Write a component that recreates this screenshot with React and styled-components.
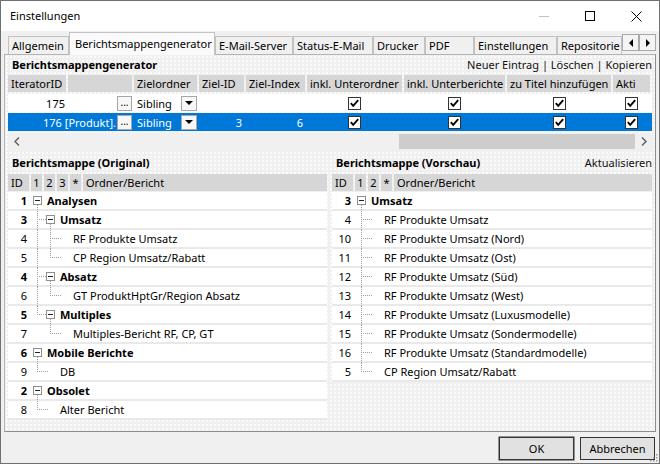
import styled, { createGlobalStyle } from "styled-components";

const GlobalStyle = createGlobalStyle`
  * { box-sizing: border-box; }
  html, body { margin: 0; padding: 0; }
  body {
    background: #f0f0f0;
    font-family: "Noto Sans", "DejaVu Sans", sans-serif;
    font-size: 11px;
    color: #000;
  }
`;

const Window = styled.div`
  position: relative;
  width: 660px;
  height: 464px;
  border: 1px solid #707070;
  background: #f0f0f0;
  display: flex;
  flex-direction: column;
  overflow: hidden;
`;

const TitleBar = styled.div`
  height: 30px;
  flex-shrink: 0;
  background: #fff;
  display: flex;
  align-items: center;
`;

const Title = styled.div`
  flex: 1;
  padding-left: 9px;
  padding-bottom: 1px;
`;

const CaptionButton = styled.div`
  width: 46px;
  height: 30px;
  display: flex;
  align-items: center;
  justify-content: center;
`;

const TabStrip = styled.div`
  height: 23px;
  flex-shrink: 0;
  display: flex;
  align-items: flex-end;
  padding-left: 7px;
`;

const Tab = styled.div`
  position: relative;
  z-index: ${(p) => (p.$active ? 1 : 0)};
  flex-shrink: 0;
  width: ${(p) => p.$w}px;
  height: ${(p) => (p.$active ? 23 : 18)}px;
  margin-bottom: ${(p) => (p.$active ? -1 : 0)}px;
  padding: ${(p) => (p.$active ? "0 0 2px 5px" : "0 0 0 3px")};
  border: 1px solid #c2c2c2;
  border-bottom: none;
  background: ${(p) => (p.$active ? "#fafafa" : "#f0f0f0")};
  display: flex;
  align-items: center;
  white-space: nowrap;
  overflow: hidden;
`;

const TabScroll = styled.div`
  align-self: flex-start;
  margin-top: 3px;
  display: flex;
`;

const TabScrollButton = styled.div`
  width: 17px;
  height: 17px;
  border: 1px solid #a9a9a9;
  background: #f4f4f4;
  display: flex;
  align-items: center;
  justify-content: center;
  &::after {
    content: "";
    border-top: 4px solid transparent;
    border-bottom: 4px solid transparent;
    ${(p) =>
      p.$dir === "left"
        ? "border-right: 4px solid #000;"
        : "border-left: 4px solid #000;"}
  }
`;

const Panel = styled.div`
  flex-shrink: 0;
  margin-left: 3px;
  width: 652px;
  height: 378px;
  border: 1px solid #b4b4b4;
  border-right-color: #8e8e8e;
  border-bottom-color: #8e8e8e;
  background-color: #f0f0f0;
  background-image: radial-gradient(circle, #fbfbfb 0.7px, transparent 0.9px);
  background-size: 4px 4px;
  padding: 0 3px 2px 3px;
  display: flex;
  flex-direction: column;
`;

const SectionBar = styled.div`
  height: ${(p) => p.$h}px;
  flex-shrink: 0;
  display: flex;
  align-items: center;
  justify-content: space-between;
  padding: 0 0 ${(p) => (p.$h > 20 ? 0 : 1)}px 4px;
`;

const SectionTitle = styled.div`
  font-weight: 700;
`;

const SectionLinks = styled.div`
  color: #111;
`;

const columns = "58px 64px 63px 45px 59px 95px 101px 104px 37px";

const GridHeader = styled.div`
  display: grid;
  grid-template-columns: ${columns};
  column-gap: 2px;
  height: 17px;
  flex-shrink: 0;
`;

const HeadCell = styled.div`
  background: #d6d6d6;
  padding: 0 3px;
  line-height: 17px;
  white-space: nowrap;
  overflow: hidden;
`;

const GridRows = styled.div`
  margin-top: 2px;
  display: flex;
  flex-direction: column;
  gap: 1px;
  flex-shrink: 0;
`;

const GridRow = styled.div`
  display: grid;
  grid-template-columns: ${columns};
  column-gap: 2px;
  height: 18px;
  background: ${(p) => (p.$selected ? "#0078d7" : "#fff")};
  color: ${(p) => (p.$selected ? "#fff" : "#000")};
`;

const Cell = styled.div`
  grid-column: ${(p) => (p.$span ? `span ${p.$span}` : "auto")};
  display: flex;
  align-items: center;
  justify-content: ${(p) =>
    p.$align === "right"
      ? "flex-end"
      : p.$align === "center"
      ? "center"
      : "space-between"};
  padding: 0 ${(p) => p.$pad || 0}px;
  white-space: nowrap;
  overflow: hidden;
`;

const CellText = styled.span`
  flex: 1;
  text-align: ${(p) => (p.$left ? "left" : "right")};
  padding: ${(p) => (p.$left ? "0 0 0 3px" : "0 1px 0 0")};
  overflow: hidden;
`;

const EllipsisButton = styled.div`
  width: 15px;
  height: 15px;
  flex-shrink: 0;
  border: 1px solid #a6a6a6;
  background: #f7f7f7;
  color: #000;
  font-size: 10px;
  line-height: 10px;
  text-align: center;
`;

const DropButton = styled.div`
  width: 16px;
  height: 15px;
  flex-shrink: 0;
  border: 1px solid #a6a6a6;
  background: #f7f7f7;
  display: flex;
  align-items: center;
  justify-content: center;
  &::after {
    content: "";
    border-left: 4px solid transparent;
    border-right: 4px solid transparent;
    border-top: 4px solid #000;
  }
`;

const CheckBox = styled.div`
  width: 13px;
  height: 13px;
  border: 1px solid #333;
  background: #fff;
  display: flex;
  align-items: center;
  justify-content: center;
`;

const HScroll = styled.div`
  margin-top: 2px;
  height: 17px;
  flex-shrink: 0;
  display: flex;
  background: #f0f0f0;
`;

const ScrollArrow = styled.div`
  width: 17px;
  display: flex;
  align-items: center;
  justify-content: center;
`;

const ScrollTrack = styled.div`
  flex: 1;
  display: flex;
  justify-content: flex-end;
  padding: 1px 0;
`;

const ScrollThumb = styled.div`
  width: 236px;
  background: #cdcdcd;
`;

const Split = styled.div`
  flex: 1;
  min-height: 0;
  display: grid;
  grid-template-columns: 319px 1fr;
  column-gap: 5px;
`;

const TreePane = styled.div`
  display: flex;
  flex-direction: column;
  min-height: 0;
`;

const TreeHeader = styled.div`
  display: flex;
  gap: 2px;
  height: 17px;
  margin-bottom: 1px;
  flex-shrink: 0;
`;

const TreeHeadCell = styled.div`
  flex: ${(p) => (p.$grow ? 1 : "none")};
  width: ${(p) => (p.$w ? `${p.$w}px` : "auto")};
  background: #d6d6d6;
  line-height: 17px;
  padding: 0 ${(p) => (p.$center ? 0 : 3)}px;
  text-align: ${(p) => (p.$center ? "center" : "left")};
  white-space: nowrap;
`;

const TreeBody = styled.div`
  flex: 1;
  background: #fff;
  overflow: hidden;
`;

const TreeRow = styled.div`
  display: flex;
  height: 19px;
  border-bottom: 2px solid #e9e9e9;
  line-height: 17px;
`;

const TreeId = styled.div`
  width: 21px;
  flex-shrink: 0;
  text-align: right;
  padding-right: 2px;
  font-weight: ${(p) => (p.$folder ? 700 : 400)};
`;

const TreeLines = styled.svg`
  display: block;
  flex-shrink: 0;
  overflow: visible;
`;

const TreeLabel = styled.span`
  white-space: nowrap;
  font-weight: ${(p) => (p.$folder ? 700 : 400)};
`;

const Footer = styled.div`
  flex: 1;
  display: flex;
  justify-content: flex-end;
  align-items: flex-start;
  gap: 6px;
  padding: 5px 4px 0 0;
`;

const DialogButton = styled.button`
  width: 75px;
  height: 23px;
  font: inherit;
  color: #000;
  background: #e1e1e1;
  border: 1px solid #333;
  box-shadow: ${(p) => (p.$default ? "inset 0 0 0 1px #e1e1e1, 0 0 0 0.5px #333" : "none")};
  padding: 0 0 1px;
`;

const Grip = styled.svg`
  position: absolute;
  right: 1px;
  bottom: 1px;
`;

const leftTree = [
  { id: 1, level: 1, folder: true, label: "Analysen" },
  { id: 3, level: 2, folder: true, label: "Umsatz" },
  { id: 4, level: 3, label: "RF Produkte Umsatz" },
  { id: 5, level: 3, label: "CP Region Umsatz/Rabatt" },
  { id: 4, level: 2, folder: true, label: "Absatz" },
  { id: 6, level: 3, label: "GT ProduktHptGr/Region Absatz" },
  { id: 5, level: 2, folder: true, label: "Multiples" },
  { id: 7, level: 3, label: "Multiples-Bericht RF, CP, GT" },
  { id: 6, level: 1, folder: true, label: "Mobile Berichte" },
  { id: 9, level: 2, label: "DB" },
  { id: 2, level: 1, folder: true, label: "Obsolet" },
  { id: 8, level: 2, label: "Alter Bericht" },
];

const rightTree = [
  { id: 3, level: 1, folder: true, label: "Umsatz" },
  { id: 4, level: 2, label: "RF Produkte Umsatz" },
  { id: 10, level: 2, label: "RF Produkte Umsatz (Nord)" },
  { id: 11, level: 2, label: "RF Produkte Umsatz (Ost)" },
  { id: 12, level: 2, label: "RF Produkte Umsatz (Süd)" },
  { id: 13, level: 2, label: "RF Produkte Umsatz (West)" },
  { id: 14, level: 2, label: "RF Produkte Umsatz (Luxusmodelle)" },
  { id: 15, level: 2, label: "RF Produkte Umsatz (Sondermodelle)" },
  { id: 16, level: 2, label: "RF Produkte Umsatz (Standardmodelle)" },
  { id: 5, level: 2, label: "CP Region Umsatz/Rabatt" },
];

const tabs = [
  { label: "Allgemein", w: 61 },
  { label: "Berichtsmappengenerator", w: 146, active: true },
  { label: "E-Mail-Server", w: 78 },
  { label: "Status-E-Mail", w: 80 },
  { label: "Drucker", w: 52 },
  { label: "PDF", w: 49 },
  { label: "Einstellungen", w: 83 },
  { label: "Repositorie", w: 65 },
];

const Check = () => (
  <CheckBox>
    <svg width="11" height="11" viewBox="0 0 11 11">
      <path d="M1.8 5.2 L4.2 7.8 L9.2 2.2" fill="none" stroke="#000" strokeWidth="1.9" />
    </svg>
  </CheckBox>
);

// vertical and horizontal dotted guides for one row of a tree
const RowLines = ({ rows, index }) => {
  const row = rows[index];
  const L = row.level;
  const cx = (k) => 13 * k - 5 + 0.5;
  const hasMore = (k) => {
    for (let j = index + 1; j < rows.length; j++) {
      if (rows[j].level <= k) return false;
      if (rows[j].level === k + 1) return true;
    }
    return false;
  };
  const dots = { stroke: "#a0a0a0", strokeDasharray: "1 1", strokeWidth: 1 };
  const parts = [];
  for (let k = 1; k < L; k++) {
    if (k === L - 1) {
      parts.push(<line key={`v${k}`} x1={cx(k)} x2={cx(k)} y1={0} y2={hasMore(k) ? 19 : 9} {...dots} />);
      const end = row.folder ? 13 * L - 9 : 13 * L - 6;
      parts.push(<line key="h" x1={cx(k) + 1.5} x2={end} y1={8.5} y2={8.5} {...dots} />);
    } else if (hasMore(k)) {
      parts.push(<line key={`v${k}`} x1={cx(k)} x2={cx(k)} y1={0} y2={19} {...dots} />);
    }
  }
  const next = rows[index + 1];
  if (row.folder) {
    const bx = 13 * (L - 1) + 4;
    if (next && next.level > L) {
      parts.push(<line key="down" x1={cx(L)} x2={cx(L)} y1={13} y2={19} {...dots} />);
    }
    parts.push(
      <rect key="box" x={bx + 0.5} y={4.5} width={8} height={8} fill="#fff" stroke="#8f8f8f" />
    );
    parts.push(
      <line key="minus" x1={bx + 2} x2={bx + 7} y1={8.5} y2={8.5} stroke="#222" />
    );
  }
  return (
    <TreeLines width={13 * L + 5} height={19}>
      {parts}
    </TreeLines>
  );
};

const Tree = ({ rows, levels }) => (
  <TreePane>
    <TreeHeader>
      <TreeHeadCell $w={21}>ID</TreeHeadCell>
      {levels.map((l) => (
        <TreeHeadCell key={l} $w={11} $center>
          {l}
        </TreeHeadCell>
      ))}
      <TreeHeadCell $w={11} $center>
        *
      </TreeHeadCell>
      <TreeHeadCell $grow>Ordner/Bericht</TreeHeadCell>
    </TreeHeader>
    <TreeBody>
      {rows.map((r, i) => (
        <TreeRow key={i}>
          <TreeId $folder={r.folder}>{r.id}</TreeId>
          <RowLines rows={rows} index={i} />
          <TreeLabel $folder={r.folder}>{r.label}</TreeLabel>
        </TreeRow>
      ))}
    </TreeBody>
  </TreePane>
);

const App = () => {
  return (
    <>
      <GlobalStyle />
      <Window>
        <TitleBar>
          <Title>Einstellungen</Title>
          <CaptionButton>
            <svg width="10" height="10">
              <line x1="0" x2="10" y1="5.5" y2="5.5" stroke="#c4c4c4" />
            </svg>
          </CaptionButton>
          <CaptionButton>
            <svg width="10" height="10">
              <rect x="0.5" y="0.5" width="9" height="9" fill="none" stroke="#000" />
            </svg>
          </CaptionButton>
          <CaptionButton>
            <svg width="11" height="11">
              <path d="M0.5 0.5 L10.5 10.5 M10.5 0.5 L0.5 10.5" stroke="#000" />
            </svg>
          </CaptionButton>
        </TitleBar>

        <TabStrip>
          {tabs.map((t) => (
            <Tab key={t.label} $w={t.w} $active={t.active}>
              {t.label}
            </Tab>
          ))}
          <TabScroll>
            <TabScrollButton $dir="left" />
            <TabScrollButton $dir="right" />
          </TabScroll>
        </TabStrip>

        <Panel>
          <SectionBar $h={20}>
            <SectionTitle>Berichtsmappengenerator</SectionTitle>
            <SectionLinks>Neuer Eintrag | Löschen | Kopieren</SectionLinks>
          </SectionBar>

          <GridHeader>
            <HeadCell>IteratorID</HeadCell>
            <HeadCell />
            <HeadCell>Zielordner</HeadCell>
            <HeadCell>Ziel-ID</HeadCell>
            <HeadCell>Ziel-Index</HeadCell>
            <HeadCell>inkl. Unterordner</HeadCell>
            <HeadCell>inkl. Unterberichte</HeadCell>
            <HeadCell>zu Titel hinzufügen</HeadCell>
            <HeadCell>Akti</HeadCell>
          </GridHeader>

          <GridRows>
            <GridRow>
              <Cell $align="right" $pad={1}>175</Cell>
              <Cell $align="right">
                <EllipsisButton>...</EllipsisButton>
              </Cell>
              <Cell>
                <CellText $left>Sibling</CellText>
                <DropButton />
              </Cell>
              <Cell />
              <Cell />
              <Cell $align="center"><Check /></Cell>
              <Cell $align="center"><Check /></Cell>
              <Cell $align="center"><Check /></Cell>
              <Cell $align="center"><Check /></Cell>
            </GridRow>
            <GridRow $selected>
              <Cell $span={2}>
                <CellText>176 [Produkt].</CellText>
                <EllipsisButton>...</EllipsisButton>
              </Cell>
              <Cell>
                <CellText $left>Sibling</CellText>
                <DropButton />
              </Cell>
              <Cell $align="right" $pad={2}>3</Cell>
              <Cell $align="right" $pad={2}>6</Cell>
              <Cell $align="center"><Check /></Cell>
              <Cell $align="center"><Check /></Cell>
              <Cell $align="center"><Check /></Cell>
              <Cell $align="center"><Check /></Cell>
            </GridRow>
          </GridRows>

          <HScroll>
            <ScrollArrow>
              <svg width="6" height="9">
                <path d="M5 0.5 L1 4.5 L5 8.5" fill="none" stroke="#606060" strokeWidth="1.5" />
              </svg>
            </ScrollArrow>
            <ScrollTrack>
              <ScrollThumb />
            </ScrollTrack>
            <ScrollArrow>
              <svg width="6" height="9">
                <path d="M1 0.5 L5 4.5 L1 8.5" fill="none" stroke="#606060" strokeWidth="1.5" />
              </svg>
            </ScrollArrow>
          </HScroll>

          <Split>
            <TreePane>
              <SectionBar $h={24}>
                <SectionTitle>Berichtsmappe (Original)</SectionTitle>
              </SectionBar>
              <Tree rows={leftTree} levels={["1", "2", "3"]} />
            </TreePane>
            <TreePane>
              <SectionBar $h={24}>
                <SectionTitle>Berichtsmappe (Vorschau)</SectionTitle>
                <SectionLinks>Aktualisieren</SectionLinks>
              </SectionBar>
              <Tree rows={rightTree} levels={["1", "2"]} />
            </TreePane>
          </Split>
        </Panel>

        <Footer>
          <DialogButton $default>OK</DialogButton>
          <DialogButton>Abbrechen</DialogButton>
        </Footer>

        <Grip width="10" height="10">
          {[[8, 2], [8, 5], [5, 5], [8, 8], [5, 8], [2, 8]].map(([x, y]) => (
            <rect key={`${x}-${y}`} x={x} y={y} width="1.5" height="1.5" fill="#9a9a9a" />
          ))}
        </Grip>
      </Window>
    </>
  );
};

export default App;
